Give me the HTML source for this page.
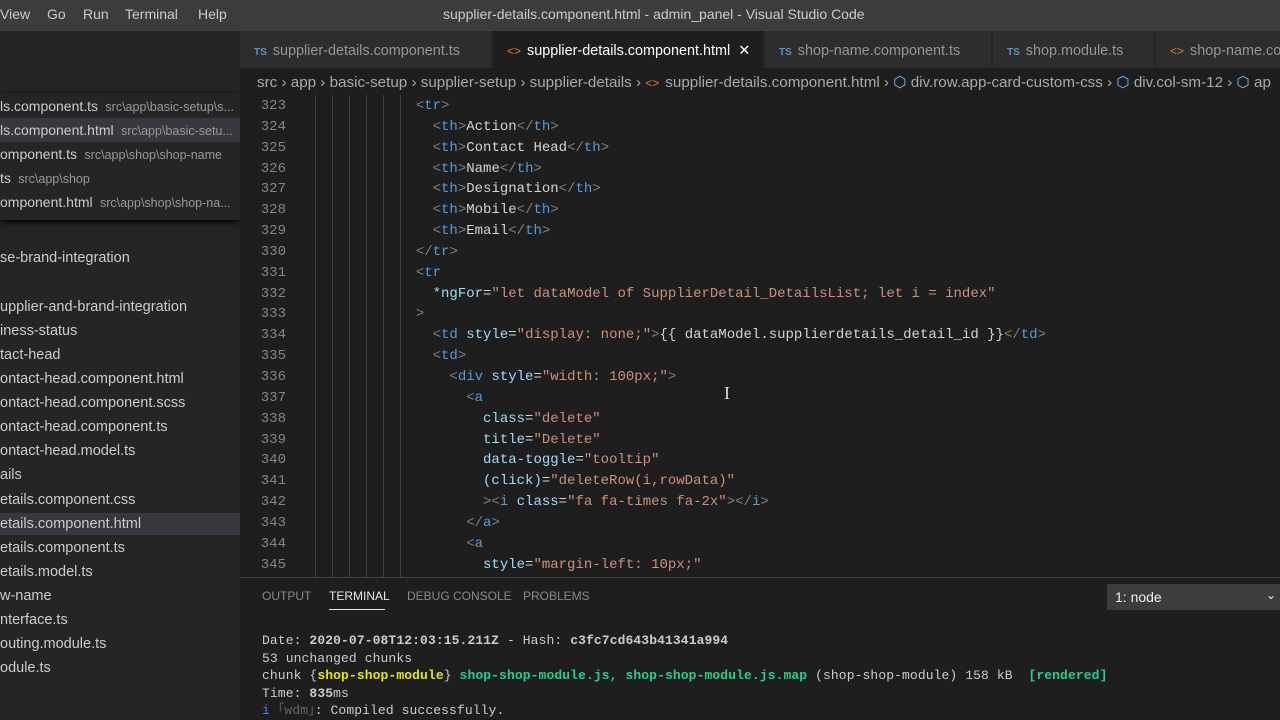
<!DOCTYPE html>
<html><head><meta charset="utf-8"><style>
*{margin:0;padding:0;box-sizing:border-box}
body{width:1280px;height:720px;overflow:hidden;background:#1e1e1e;font-family:"Liberation Sans",sans-serif;color:#ccc;position:relative}
.abs{position:absolute;white-space:nowrap}
#title{left:0;top:0;width:1280px;height:31px;background:#3c3c3c}
#title span{position:absolute;top:6px;font-size:14px;color:#ccc}
#side{left:0;top:31px;width:240px;height:689px;background:#252526;overflow:hidden}
#tabs{left:240px;top:31px;width:1040px;height:37px;background:#252526}
.tab{position:absolute;top:0;height:37px;background:#2d2d2d;font-size:14.4px;color:#969696;padding:12px 0 0 14px;border-right:1px solid #252526;white-space:nowrap;overflow:hidden}
.ts{color:#519aba;font-size:10px;font-weight:bold;margin-right:6px}
.ht{color:#e37933;font-size:12px;margin-right:6px}
#crumb{left:240px;top:68px;width:1040px;height:27px;font-size:15.2px;color:#a9a9a9;padding:5px 0 0 17px;overflow:hidden}
.code{font-family:"Liberation Mono",monospace;font-size:14px;line-height:20.85px}
.t{color:#569cd6}.g{color:#808080}.a{color:#9cdcfe}.s{color:#ce9178}.w{color:#d4d4d4}
#nums{left:240px;top:96px;width:46px;text-align:right;color:#858585}
#src{left:315px;top:96px;color:#d4d4d4;white-space:pre}
.side-item{position:absolute;left:0;font-size:14.5px;color:#ccc;white-space:nowrap}
.qo{font-size:14px}
#panel{left:240px;top:577px;width:1040px;height:143px;background:#1e1e1e;border-top:1px solid #444}
.ptab{position:absolute;top:11px;font-size:12px;color:#8a8a8a}
.term{font-family:"Liberation Mono",monospace;font-size:13px;line-height:17.5px;color:#ccc;white-space:pre;letter-spacing:0.1px}
</style></head><body>
<div id="title" class="abs">
<span style="left:0">View</span><span style="left:47px">Go</span><span style="left:83px">Run</span><span style="left:125px">Terminal</span><span style="left:198px">Help</span>
<span style="left:443px">supplier-details.component.html - admin_panel - Visual Studio Code</span>
</div>
<div id="side" class="abs">
 <div style="position:absolute;left:0;top:62px;width:240px;height:127px;background:#252526;box-shadow:0 2px 6px #000"></div>
 <div style="position:absolute;left:0;top:87px;width:240px;height:24px;background:#37373d"></div>
 <div class="side-item qo" style="top:67px">ls.component.ts <span style="color:#999;font-size:12.5px">&nbsp;src\app\basic-setup\s...</span></div>
 <div class="side-item qo" style="top:91px">ls.component.html <span style="color:#999;font-size:12.5px">&nbsp;src\app\basic-setu...</span></div>
 <div class="side-item qo" style="top:115px">omponent.ts <span style="color:#999;font-size:12.5px">&nbsp;src\app\shop\shop-name</span></div>
 <div class="side-item qo" style="top:139px">ts <span style="color:#999;font-size:12.5px">&nbsp;src\app\shop</span></div>
 <div class="side-item qo" style="top:163px">omponent.html <span style="color:#999;font-size:12.5px">&nbsp;src\app\shop\shop-na...</span></div>
 <div style="position:absolute;left:0;top:482px;width:240px;height:22px;background:#37373d"></div>
 <div class="side-item" style="top:219px">se-brand-integration</div>
 <div class="side-item" style="top:268px">upplier-and-brand-integration</div>
 <div class="side-item" style="top:292px">iness-status</div>
 <div class="side-item" style="top:316px">tact-head</div>
 <div class="side-item" style="top:340px">ontact-head.component.html</div>
 <div class="side-item" style="top:364px">ontact-head.component.scss</div>
 <div class="side-item" style="top:388px">ontact-head.component.ts</div>
 <div class="side-item" style="top:412px">ontact-head.model.ts</div>
 <div class="side-item" style="top:436px">ails</div>
 <div class="side-item" style="top:461px">etails.component.css</div>
 <div class="side-item" style="top:485px">etails.component.html</div>
 <div class="side-item" style="top:509px">etails.component.ts</div>
 <div class="side-item" style="top:533px">etails.model.ts</div>
 <div class="side-item" style="top:557px">w-name</div>
 <div class="side-item" style="top:581px">nterface.ts</div>
 <div class="side-item" style="top:605px">outing.module.ts</div>
 <div class="side-item" style="top:629px">odule.ts</div>
</div>
<div id="tabs" class="abs">
 <div class="tab" style="left:0;width:252px"><span class="ts">TS</span>supplier-details.component.ts</div>
 <div class="tab" style="left:253px;width:271px;background:#1e1e1e;color:#fff"><span class="ht">&lt;&gt;</span>supplier-details.component.html <span style="margin-left:4px">✕</span></div>
 <div class="tab" style="left:525px;width:227px"><span class="ts">TS</span>shop-name.component.ts</div>
 <div class="tab" style="left:753px;width:162px"><span class="ts">TS</span>shop.module.ts</div>
 <div class="tab" style="left:916px;width:124px;border:none"><span class="ht">&lt;&gt;</span>shop-name.component.html</div>
</div>
<div id="crumb" class="abs">src › app › basic-setup › supplier-setup › supplier-details › <span class="ht">&lt;&gt;</span>supplier-details.component.html › <span style="color:#75beff">⬡</span> div.row.app-card-custom-css › <span style="color:#75beff">⬡</span> div.col-sm-12 › <span style="color:#75beff">⬡</span> ap</div>
<div class="abs" style="left:315px;top:95px;width:101px;height:482px;background:repeating-linear-gradient(90deg,#404040 0 1px,transparent 1px 17px)"></div>
<div id="nums" class="abs code">323<br>324<br>325<br>326<br>327<br>328<br>329<br>330<br>331<br>332<br>333<br>334<br>335<br>336<br>337<br>338<br>339<br>340<br>341<br>342<br>343<br>344<br>345</div>
<div id="src" class="abs code"><span>            </span><span class="g">&lt;</span><span class="t">tr</span><span class="g">&gt;</span>
              <span class="g">&lt;</span><span class="t">th</span><span class="g">&gt;</span>Action<span class="g">&lt;/</span><span class="t">th</span><span class="g">&gt;</span>
              <span class="g">&lt;</span><span class="t">th</span><span class="g">&gt;</span>Contact Head<span class="g">&lt;/</span><span class="t">th</span><span class="g">&gt;</span>
              <span class="g">&lt;</span><span class="t">th</span><span class="g">&gt;</span>Name<span class="g">&lt;/</span><span class="t">th</span><span class="g">&gt;</span>
              <span class="g">&lt;</span><span class="t">th</span><span class="g">&gt;</span>Designation<span class="g">&lt;/</span><span class="t">th</span><span class="g">&gt;</span>
              <span class="g">&lt;</span><span class="t">th</span><span class="g">&gt;</span>Mobile<span class="g">&lt;/</span><span class="t">th</span><span class="g">&gt;</span>
              <span class="g">&lt;</span><span class="t">th</span><span class="g">&gt;</span>Email<span class="g">&lt;/</span><span class="t">th</span><span class="g">&gt;</span>
            <span class="g">&lt;/</span><span class="t">tr</span><span class="g">&gt;</span>
            <span class="g">&lt;</span><span class="t">tr</span>
              <span class="a">*ngFor</span>=<span class="s">"let dataModel of SupplierDetail_DetailsList; let i = index"</span>
            <span class="g">&gt;</span>
              <span class="g">&lt;</span><span class="t">td</span> <span class="a">style</span>=<span class="s">"display: none;"</span><span class="g">&gt;</span>{{ dataModel.supplierdetails_detail_id }}<span class="g">&lt;/</span><span class="t">td</span><span class="g">&gt;</span>
              <span class="g">&lt;</span><span class="t">td</span><span class="g">&gt;</span>
                <span class="g">&lt;</span><span class="t">div</span> <span class="a">style</span>=<span class="s">"width: 100px;"</span><span class="g">&gt;</span>
                  <span class="g">&lt;</span><span class="t">a</span>
                    <span class="a">class</span>=<span class="s">"delete"</span>
                    <span class="a">title</span>=<span class="s">"Delete"</span>
                    <span class="a">data-toggle</span>=<span class="s">"tooltip"</span>
                    <span class="a">(click)</span>=<span class="s">"deleteRow(i,rowData)"</span>
                    <span class="g">&gt;&lt;</span><span class="t">i</span> <span class="a">class</span>=<span class="s">"fa fa-times fa-2x"</span><span class="g">&gt;&lt;/</span><span class="t">i</span><span class="g">&gt;</span>
                  <span class="g">&lt;/</span><span class="t">a</span><span class="g">&gt;</span>
                  <span class="g">&lt;</span><span class="t">a</span>
                    <span class="a">style</span>=<span class="s">"margin-left: 10px;"</span></div>
<div class="abs" style="left:724px;top:383px;color:#ddd;font-size:18px;font-family:'Liberation Serif',serif">I</div>
<div id="panel" class="abs">
 <span class="ptab" style="left:22px">OUTPUT</span>
 <span class="ptab" style="left:89px;color:#e7e7e7">TERMINAL</span>
 <div style="position:absolute;left:89px;top:31px;width:56px;height:1px;background:#e7e7e7"></div>
 <span class="ptab" style="left:167px">DEBUG CONSOLE</span>
 <span class="ptab" style="left:283px">PROBLEMS</span>
 <div style="position:absolute;left:867px;top:6px;width:173px;height:26px;background:#3c3c3c;color:#f0f0f0;font-size:14px;padding:5px 0 0 8px">1: node<span style="position:absolute;right:4px;top:4px;font-size:12px">⌄</span></div>
 <div class="abs term" style="left:22px;top:54px">Date: <b>2020-07-08T12:03:15.211Z</b> - Hash: <b>c3fc7cd643b41341a994</b>
53 unchanged chunks
chunk {<b style="color:#e5e510">shop-shop-module</b>} <b style="color:#23d18b">shop-shop-module.js, shop-shop-module.js.map</b> (shop-shop-module) 158 kB  <b style="color:#23d18b">[rendered]</b>
Time: <b>835</b>ms
<span style="color:#3b8eea">i</span> <span style="color:#666">｢wdm｣</span>: Compiled successfully.</div>
</div>
</body></html>
